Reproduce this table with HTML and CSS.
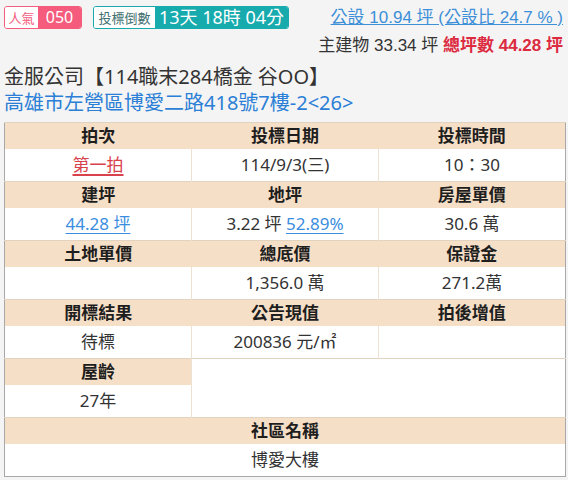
FILE: index.html
```html
<!DOCTYPE html>
<html lang="zh-Hant">
<head>
<meta charset="utf-8">
<link rel="stylesheet" href="styles.css">
</head>
<body>
<div class="top">
  <div class="badges">
    <span class="badge pink"><span class="lbl">人氣</span><span class="val">050</span></span>
    <span class="badge teal"><span class="lbl">投標倒數</span><span class="val">13天 18時 04分</span></span>
  </div>
  <div class="area">
    <div class="line1"><a class="link">公設 10.94 坪 (公設比 24.7 % )</a></div>
    <div class="line2">主建物 33.34 坪 <span class="total">總坪數 44.28 坪</span></div>
  </div>
</div>
<div class="title">金服公司【114職末284橋金 谷OO】</div>
<div class="addr">高雄市左營區博愛二路418號7樓-2&lt;26&gt;</div>
<table class="info">
  <tr class="h"><th>拍次</th><th>投標日期</th><th>投標時間</th></tr>
  <tr class="d"><td><a class="red">第一拍</a></td><td>114/9/3(三)</td><td>10：30</td></tr>
  <tr class="h"><th>建坪</th><th>地坪</th><th>房屋單價</th></tr>
  <tr class="d"><td><a class="blue">44.28 坪</a></td><td>3.22 坪 <a class="blue">52.89%</a></td><td>30.6 萬</td></tr>
  <tr class="h"><th>土地單價</th><th>總底價</th><th>保證金</th></tr>
  <tr class="d"><td></td><td>1,356.0 萬</td><td>271.2萬</td></tr>
  <tr class="h"><th>開標結果</th><th>公告現值</th><th>拍後增值</th></tr>
  <tr class="d"><td>待標</td><td>200836 元/㎡</td><td></td></tr>
  <tr class="h"><th>屋齡</th><td class="blank" colspan="2" rowspan="2"></td></tr>
  <tr class="d"><td>27年</td></tr>
  <tr class="h"><th colspan="3">社區名稱</th></tr>
  <tr class="d"><td colspan="3">博愛大樓</td></tr>
</table>
</body>
</html>
```
FILE: styles.css
```css
html, body {
  margin: 0;
  padding: 0;
  background: #f4f4f4;
}
body {
  font-family: "Noto Sans", "Noto Sans CJK TC", sans-serif;
  color: #333;
}
.top {
  display: flex;
  justify-content: space-between;
  align-items: flex-start;
  padding: 4px 5px 0 4px;
  height: 58px;
}
.badges {
  display: flex;
  gap: 11px;
  padding-top: 2px;
}
.badge {
  display: flex;
  height: 23px;
  box-sizing: border-box;
  border-radius: 3px;
  overflow: hidden;
  border: 1px solid;
  line-height: 21px;
}
.badge .lbl {
  background: #fff;
  font-family: "Noto Sans CJK TC", sans-serif;
  font-size: 13px;
  text-align: center;
  white-space: nowrap;
}
.badge .val {
  color: #fff;
  text-align: center;
  white-space: nowrap;
}
.pink { border-color: #f45b7c; }
.pink .lbl { color: #f45b7c; width: 33px; }
.pink .val { background: #f45b7c; width: 43px; font-size: 16px; font-family: "Noto Sans", sans-serif; }
.teal { border-color: #17abae; }
.teal .lbl { color: #3f6f70; width: 61px; }
.teal .val { background: #17abae; width: 133px; font-size: 18px; font-family: "Noto Sans", "Noto Sans CJK TC", sans-serif; }
.area {
  text-align: right;
  font-family: "Liberation Sans", "Noto Sans CJK TC", sans-serif;
  font-size: 17px;
  line-height: 28px;
  color: #333;
}
.link {
  color: #3d8fd8;
  text-decoration: underline;
}
.total {
  color: #dc2a40;
  font-weight: bold;
}
.title, .addr {
  padding-left: 4px;
  font-size: 20px;
  line-height: 26px;
}
.title { color: #333; margin-top: 2px; }
.addr { color: #2b7fd6; }
.info {
  margin: 6px 0 0 4px;
  width: 562px;
  table-layout: fixed;
  border-collapse: collapse;
  border: 1px solid #a8a8a8;
  font-size: 17px;
}
.info th, .info td {
  padding: 0;
  text-align: center;
}
.info th {
  background: #f6dfc7;
  color: #1e1e1e;
  font-weight: bold;
  height: 26px;
  line-height: 26px;
  border-top: 1px solid #e2d3c1;
}
.info td {
  background: #fff;
  height: 32px;
  line-height: 32px;
  border-left: 1px solid #ece1d3;
  color: #333;
}
.info td:first-child { border-left: none; }
.info td.blank {
  border-left: 1px solid #ece1d3;
  border-top: 1px solid #e2d3c1;
}
.red {
  color: #d8424d;
  text-decoration: underline;
  text-decoration-thickness: 2px;
  text-underline-offset: 3px;
}
.blue {
  color: #3a8de0;
  text-decoration: underline;
  text-underline-offset: 3px;
}
```
